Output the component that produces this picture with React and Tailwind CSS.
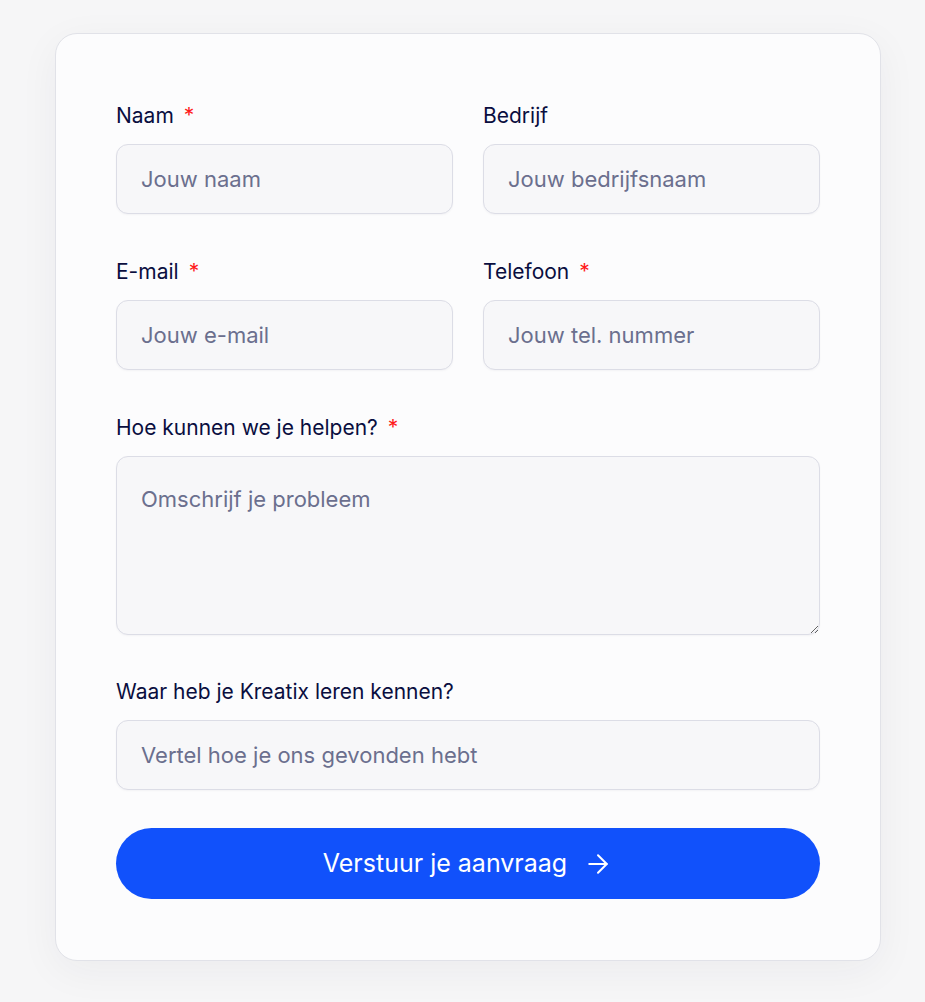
import { ArrowRight } from 'lucide-react';

function Label({ children, required }) {
  return (
    <label className="block text-[21px] leading-[28px] text-[#0a0e3f] mb-[14px]">
      {children}
      {required && <span className="text-[#ff1a1a] ml-[10px]">*</span>}
    </label>
  );
}

const inputCls =
  "w-full h-[70px] px-[24px] rounded-[12px] border border-[#dcdde6] bg-[#f7f7f9] text-[22px] text-[#0a0e3f] placeholder:text-[#6b6f8e] shadow-[0_1px_2px_rgba(20,20,60,0.04)] outline-none";

export default function App() {
  return (
    <div className="min-h-[1002px] bg-[#f6f6f7] pt-[33px] pl-[55px]" style={{ fontFamily: 'Inter, "Noto Sans", sans-serif' }}>
      <form className="w-[826px] rounded-[22px] border border-[#e1e2e8] bg-[#fcfcfd] px-[60px] pt-[68px] pb-[61px] shadow-[0_10px_40px_rgba(30,30,60,0.05)]">
        {/* Name + company */}
        <div className="grid grid-cols-2 gap-x-[30px] gap-y-[44px]">
          <div>
            <Label required>Naam</Label>
            <input className={inputCls} placeholder="Jouw naam" />
          </div>
          <div>
            <Label>Bedrijf</Label>
            <input className={inputCls} placeholder="Jouw bedrijfsnaam" />
          </div>
          <div>
            <Label required>E-mail</Label>
            <input className={inputCls} placeholder="Jouw e-mail" />
          </div>
          <div>
            <Label required>Telefoon</Label>
            <input className={inputCls} placeholder="Jouw tel. nummer" />
          </div>
        </div>

        {/* Message */}
        <div className="mt-[44px]">
          <Label required>Hoe kunnen we je helpen?</Label>
          <textarea
            className="block w-full h-[179px] px-[24px] py-[28px] rounded-[12px] border border-[#dcdde6] bg-[#f7f7f9] text-[22px] leading-[28px] text-[#0a0e3f] placeholder:text-[#6b6f8e] shadow-[0_1px_2px_rgba(20,20,60,0.04)] outline-none"
            placeholder="Omschrijf je probleem"
          />
        </div>

        <div className="mt-[43px]">
          <Label>Waar heb je Kreatix leren kennen?</Label>
          <input className={inputCls} placeholder="Vertel hoe je ons gevonden hebt" />
        </div>

        <button
          type="button"
          className="mt-[38px] w-full h-[71px] rounded-full bg-[#1151fb] text-white text-[25px] flex items-center justify-center gap-[16px]"
        >
          Verstuur je aanvraag
          <ArrowRight className="w-[30px] h-[30px]" strokeWidth={1.6} />
        </button>
      </form>
    </div>
  );
}
